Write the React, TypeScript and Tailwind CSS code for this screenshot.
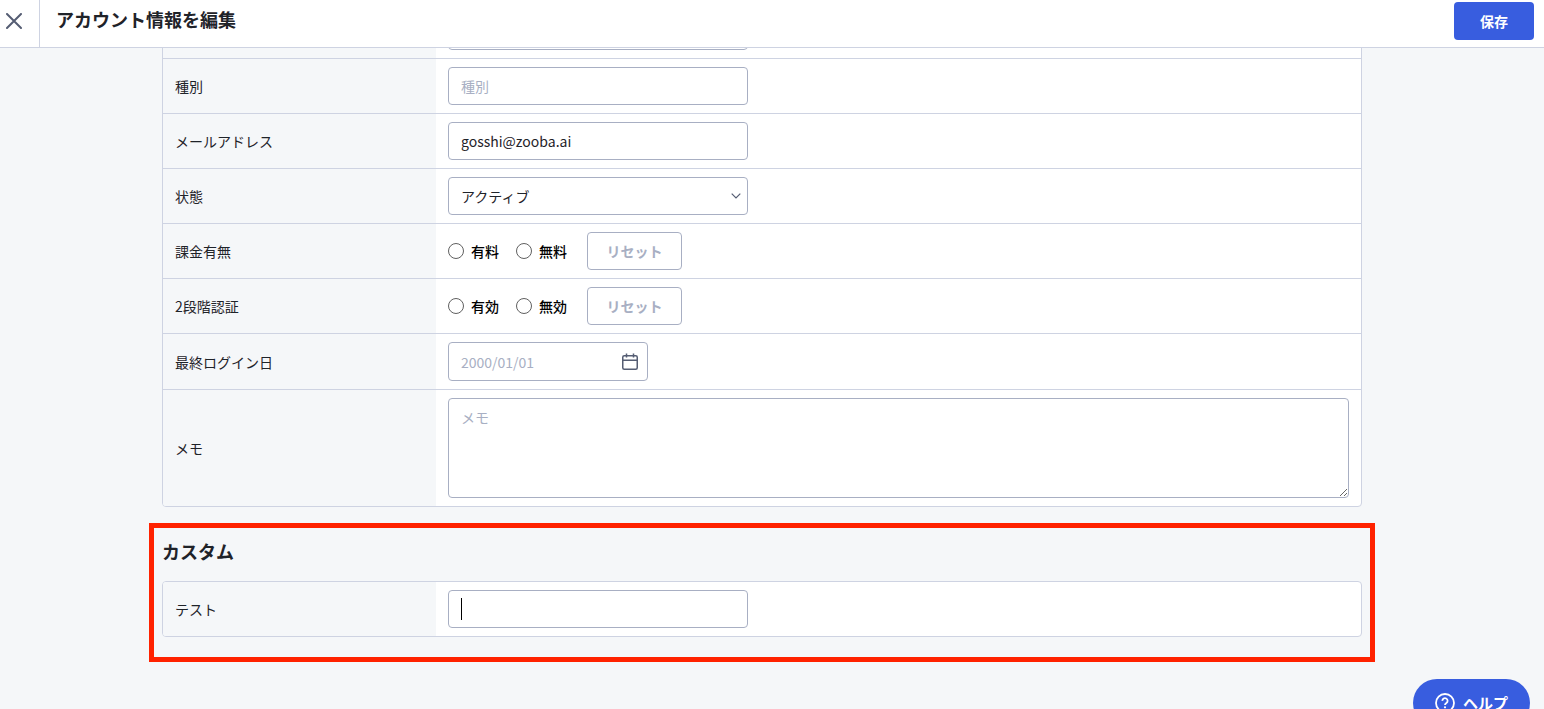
import type { ReactNode } from "react";
import { useState } from "react";

const CONTROL =
    "rounded border border-[#a8afc3] bg-white px-3 text-sm text-[#1f2329] outline-none placeholder:text-[#a8afc3]";

type RowProps = {
    label: string;
    htmlFor?: string;
    children: ReactNode;
};

function FormRow({ label, htmlFor, children }: RowProps) {
    return (
        <div className="flex border-b border-[#ced3e2] last:border-b-0">
            <div className="flex w-[273px] shrink-0 items-center bg-[#f5f7f9] px-3">
                <label htmlFor={htmlFor}>{label}</label>
            </div>
            <div className="flex min-w-0 flex-1 items-center px-3 py-2">{children}</div>
        </div>
    );
}

function FormTable({ children }: { children: ReactNode }) {
    return (
        <div className="overflow-hidden rounded border border-[#ced3e2] bg-white">{children}</div>
    );
}

type RadioRowProps = {
    label: string;
    name: string;
    options: string[];
};

function RadioRow({ label, name, options }: RadioRowProps) {
    const [selected, setSelected] = useState<string | null>(null);

    return (
        <FormRow label={label}>
            <div className="flex items-center gap-5" role="radiogroup" aria-label={label}>
                <div className="flex items-center gap-[17px]">
                    {options.map((option) => (
                        <label key={option} className="flex items-center gap-[7px] font-medium text-black">
                            <input
                                type="radio"
                                name={name}
                                checked={selected === option}
                                onChange={() => setSelected(option)}
                                className="size-4 appearance-none rounded-full border border-[#606060] bg-white checked:border-4 checked:border-[#385ddf]"
                            />
                            <span>{option}</span>
                        </label>
                    ))}
                </div>
                <button
                    type="button"
                    onClick={() => setSelected(null)}
                    className="h-[38px] w-[95px] rounded border border-[#a8afc3] bg-white font-bold text-[#a8afc3]"
                >
                    リセット
                </button>
            </div>
        </FormRow>
    );
}

function CloseIcon() {
    return (
        <svg viewBox="0 0 16 16" className="size-4" fill="none" stroke="#555d73" strokeWidth="2" strokeLinecap="round" aria-hidden="true">
            <path d="M1 1l14 14M15 1L1 15" />
        </svg>
    );
}

function CalendarIcon() {
    return (
        <svg viewBox="0 0 16 18" className="h-[18px] w-4" fill="none" stroke="#555d73" strokeWidth="1.5" aria-hidden="true">
            <rect x="0.75" y="2.75" width="14.5" height="13.5" rx="1.5" />
            <path d="M1 7.25h14M4.5 0.5v4M11.5 0.5v4" />
        </svg>
    );
}

function ChevronIcon() {
    return (
        <svg viewBox="0 0 10 6" className="h-1.5 w-2.5" fill="none" stroke="#555d73" strokeWidth="1.2" aria-hidden="true">
            <path d="M0.7 0.7L5 5l4.3-4.3" />
        </svg>
    );
}

function HelpIcon() {
    return (
        <svg viewBox="0 0 20 20" className="size-5" fill="none" stroke="white" strokeWidth="1.8" aria-hidden="true">
            <circle cx="10" cy="10" r="9" />
            <path d="M7.4 7.9a2.6 2.6 0 1 1 4 2.1c-.9.6-1.4 1-1.4 2.1" />
            <circle cx="10" cy="14.3" r="1.1" fill="white" stroke="none" />
        </svg>
    );
}

export default function App() {
    return (
        <form
            className="h-screen overflow-hidden bg-[#f5f7f9] font-['Noto_Sans_CJK_JP',sans-serif] text-sm text-[#1f2329]"
            onSubmit={(event) => event.preventDefault()}
        >
            <header className="relative z-10 flex h-12 border-b border-[#ced3e2] bg-white">
                <button type="button" aria-label="閉じる" className="flex w-10 items-center border-r border-[#ced3e2] pb-[5px] pl-1.5">
                    <CloseIcon />
                </button>
                <div className="flex flex-1 items-center justify-between pr-2.5 pb-[5px] pl-4">
                    <h1 className="pb-1 text-lg font-bold">アカウント情報を編集</h1>
                    <button type="submit" className="h-[38px] w-20 rounded bg-[#385ddf] font-bold text-white">
                        保存
                    </button>
                </div>
            </header>

            <main className="pr-5">
                <div className="mx-auto max-w-[1200px]">
                    {/* list is scrolled: its first row is mostly under the header */}
                    <div className="-mt-[45px]">
                        <FormTable>
                            <FormRow label="">
                                <input aria-label="氏名" className={`${CONTROL} h-[38px] w-[300px]`} />
                            </FormRow>
                            <FormRow label="種別" htmlFor="kind">
                                <input id="kind" placeholder="種別" className={`${CONTROL} h-[38px] w-[300px]`} />
                            </FormRow>
                            <FormRow label="メールアドレス" htmlFor="email">
                                <input id="email" type="email" defaultValue="gosshi@zooba.ai" className={`${CONTROL} h-[38px] w-[300px]`} />
                            </FormRow>
                            <FormRow label="状態" htmlFor="status">
                                <div className="relative">
                                    <select id="status" className={`${CONTROL} h-[38px] w-[300px] appearance-none`}>
                                        <option>アクティブ</option>
                                    </select>
                                    <span className="pointer-events-none absolute inset-y-0 right-[7px] flex items-center">
                                        <ChevronIcon />
                                    </span>
                                </div>
                            </FormRow>
                            <RadioRow label="課金有無" name="billing" options={["有料", "無料"]} />
                            <RadioRow label="2段階認証" name="two-factor" options={["有効", "無効"]} />
                            <FormRow label="最終ログイン日" htmlFor="last-login">
                                <div className="relative">
                                    <input id="last-login" placeholder="2000/01/01" className={`${CONTROL} h-[39px] w-[200px]`} />
                                    <span className="pointer-events-none absolute inset-y-0 right-2.5 flex items-center">
                                        <CalendarIcon />
                                    </span>
                                </div>
                            </FormRow>
                            <FormRow label="メモ" htmlFor="memo">
                                <textarea id="memo" placeholder="メモ" className={`${CONTROL} h-[100px] w-full resize py-2`} />
                            </FormRow>
                        </FormTable>
                    </div>

                    <section className="-mx-[13px] mt-4 border-5 border-[#ff2200] px-2 pt-[11px] pb-5">
                        <h2 className="pb-[18px] text-lg leading-6 font-bold">カスタム</h2>
                        <FormTable>
                            <FormRow label="テスト" htmlFor="test">
                                <div className="relative">
                                    <input id="test" className={`${CONTROL} h-[38px] w-[300px]`} />
                                    <span className="pointer-events-none absolute top-2 left-[13px] h-[22px] w-px bg-black" />
                                </div>
                            </FormRow>
                        </FormTable>
                    </section>
                </div>
            </main>

            <button
                type="button"
                className="fixed right-3.5 -bottom-[18px] flex h-12 items-center gap-2 rounded-full bg-[#385ddf] px-[22px] text-[15px] font-bold text-white"
            >
                <HelpIcon />
                ヘルプ
            </button>
        </form>
    );
}
